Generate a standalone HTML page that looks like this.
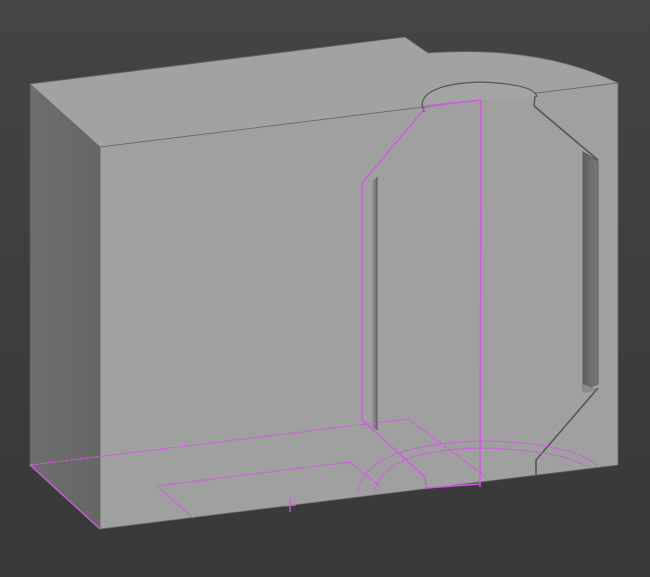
<!DOCTYPE html>
<html><head><meta charset="utf-8"><style>
html,body{margin:0;padding:0;background:#3b3b3b;}
svg{display:block}
</style></head><body>
<svg width="650" height="577" viewBox="0 0 650 577" xmlns="http://www.w3.org/2000/svg">
<defs>
<linearGradient id="bg" x1="0" y1="0" x2="0" y2="1"><stop offset="0" stop-color="#444"/><stop offset="1" stop-color="#383838"/></linearGradient>
<linearGradient id="slotR" x1="0" y1="0" x2="1" y2="0"><stop offset="0" stop-color="#5e5e5e"/><stop offset="1" stop-color="#7a7a7a"/></linearGradient>
<linearGradient id="lf" x1="0" y1="0" x2="1" y2="0"><stop offset="0" stop-color="#6e6e6e"/><stop offset="1" stop-color="#666"/></linearGradient>
</defs>
<rect width="650" height="577" fill="url(#bg)"/>
<polygon points="30,84 100,147 100,529 30,465" fill="url(#lf)" stroke="#555" stroke-width="0.8"/>
<path d="M30,84 L405,37 L428,53 Q540,45 618,83 L100,147 Z" fill="#a2a2a2" stroke="#6a6a6a" stroke-width="0.8"/>
<polygon points="100,147 618,83 618,465 100,529" fill="#a0a0a0" stroke="#666" stroke-width="0.8"/>
<path d="M422,104 Q425,84 480,82 Q535,84 537,97" fill="#a4a4a4" stroke="#555" stroke-width="1.2"/>
<line x1="422" y1="104" x2="424" y2="112" stroke="#555" stroke-width="1.5"/>
<line x1="535" y1="96" x2="534" y2="106" stroke="#555" stroke-width="1.5"/>
<polyline points="534,106 598,160" stroke="#555" stroke-width="1.6" fill="none"/>
<polygon points="583,152 598,161 598,384 583,390" fill="url(#slotR)" stroke="#555" stroke-width="0.8"/>
<polygon points="583,384 598,390 583,393" fill="#8a8a8a"/>
<polyline points="598,388 536,460 536,476" stroke="#555" stroke-width="1.6" fill="none"/>
<polygon points="374,180 377,177 377,430 374,428" fill="#7a7a7a"/>
<line x1="377" y1="177" x2="377" y2="430" stroke="#555" stroke-width="1"/>
<line x1="373" y1="180" x2="373" y2="428" stroke="#777" stroke-width="0.8"/>
<g stroke="#d555e6" stroke-width="1.4" fill="none">
<polyline points="426,107 362,183 362,420 425,477 426,488 480,484"/>
<line x1="426" y1="106" x2="481" y2="100"/>
<line x1="481" y1="100" x2="480" y2="487"/>
<line x1="30" y1="465" x2="100" y2="529"/>
</g>
<g stroke="#d555e6" stroke-width="1.1" fill="none" stroke-dasharray="4,1">
<polyline points="30,465 408,419 485,476"/>
<polyline points="157,486 350,462 382,488"/>
<line x1="157" y1="486" x2="193" y2="518"/>
<path d="M358,492 Q365,445 480,441 Q570,442 598,466"/>
<path d="M375,490 Q385,450 480,448 Q560,450 585,466"/>
</g>
<g stroke="#d555e6" stroke-width="1.3">
<line x1="290" y1="498" x2="290" y2="512"/>
<line x1="285" y1="506" x2="296" y2="505"/>
</g>
</svg>
</body></html>
